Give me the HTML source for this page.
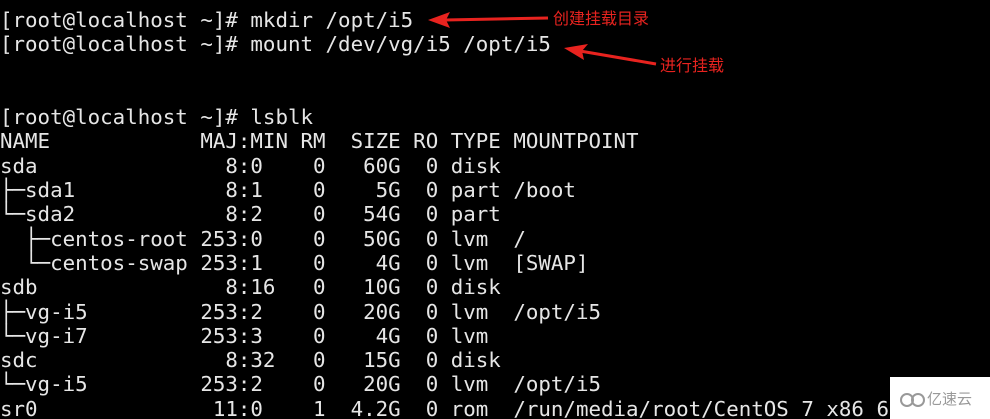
<!DOCTYPE html>
<html><head><meta charset="utf-8"><style>
html,body{margin:0;padding:0;background:#000;width:990px;height:419px;overflow:hidden;position:relative}
pre{position:absolute;left:0;top:8px;margin:0;font-family:"DejaVu Sans Mono","Liberation Mono",monospace;font-size:20.8px;line-height:24.3px;color:#e6e6e6}
.lbl{position:absolute;color:#e8231f;font-family:"Liberation Sans","Noto Sans CJK SC",sans-serif;font-size:16px;line-height:18px}
.wm{position:absolute;left:890px;top:377px;width:100px;height:42px;background:#fff}
.wm span{position:absolute;left:37px;top:11px;font-family:"Liberation Sans","Noto Sans CJK SC",sans-serif;font-size:15px;color:#999}
</style></head><body>
<pre>[root@localhost ~]# mkdir /opt/i5
[root@localhost ~]# mount /dev/vg/i5 /opt/i5


[root@localhost ~]# lsblk
NAME            MAJ:MIN RM  SIZE RO TYPE MOUNTPOINT
sda               8:0    0   60G  0 disk 
├─sda1            8:1    0    5G  0 part /boot
└─sda2            8:2    0   54G  0 part 
  ├─centos-root 253:0    0   50G  0 lvm  /
  └─centos-swap 253:1    0    4G  0 lvm  [SWAP]
sdb               8:16   0   10G  0 disk 
├─vg-i5         253:2    0   20G  0 lvm  /opt/i5
└─vg-i7         253:3    0    4G  0 lvm  
sdc               8:32   0   15G  0 disk 
└─vg-i5         253:2    0   20G  0 lvm  /opt/i5
sr0              11:0    1  4.2G  0 rom  /run/media/root/CentOS 7 x86 6</pre>
<svg width="990" height="419" style="position:absolute;left:0;top:0">
<line x1="548" y1="18" x2="445" y2="20" stroke="#e8231f" stroke-width="3"/>
<polygon points="428,20 450,12 446,20 450,28" fill="#e8231f"/>
<line x1="656" y1="64" x2="580" y2="51" stroke="#e8231f" stroke-width="3"/>
<polygon points="564,48 588,44 582,51 584,60" fill="#e8231f"/>
</svg>
<div class="lbl" style="left:553px;top:11px">创建挂载目录</div>
<div class="lbl" style="left:660px;top:58px">进行挂载</div>
<div class="wm"><svg width="30" height="20" style="position:absolute;left:8px;top:12px"><circle cx="9" cy="11" r="6" fill="none" stroke="#999" stroke-width="2"/><circle cx="20" cy="11" r="6" fill="none" stroke="#999" stroke-width="2"/></svg><span>亿速云</span></div>
</body></html>
